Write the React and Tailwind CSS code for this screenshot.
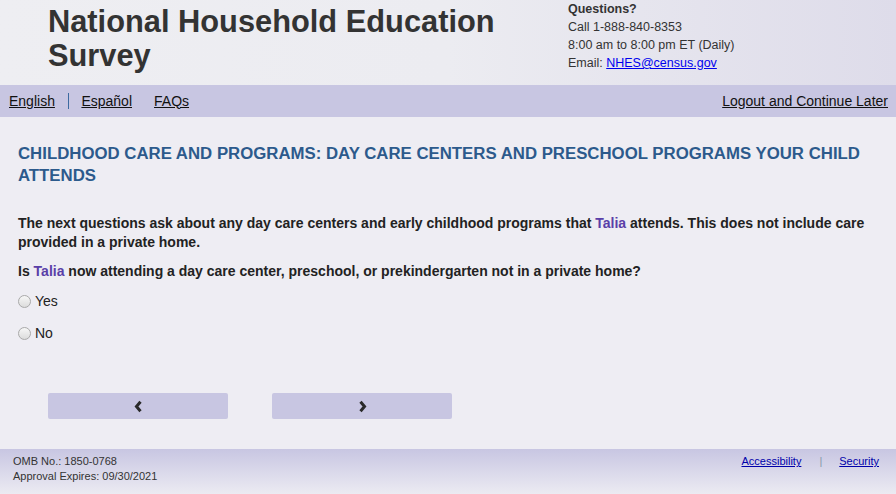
import React from "react";

function Radio({ label }) {
  return (
    <label className="flex items-center h-[20px] text-[14px] text-[#222]">
      <span className="w-[13px] h-[13px] rounded-full border border-[#a9a9a9] bg-gradient-to-b from-[#f7f7f7] to-[#dcdcdc] ml-[18px] mr-[4px]"></span>
      {label}
    </label>
  );
}

export default function App() {
  return (
    <div className="w-[896px] h-[494px] flex flex-col bg-[#eeedf3] font-['Liberation_Sans',Arial,sans-serif] overflow-hidden">
      {/* header */}
      <div className="h-[85px] flex bg-gradient-to-r from-[#eeeef2] via-[#ececf1] to-[#dedcea]">
        <div className="w-[520px] pl-[48px] pt-[5px]">
          <h1 className="text-[30.8px] leading-[34px] font-bold text-[#333]">
            National Household Education Survey
          </h1>
        </div>
        <div className="pl-[48px] text-[12.5px] leading-[18px] text-[#333]">
          <p className="font-bold">Questions?</p>
          <p>Call 1-888-840-8353</p>
          <p>8:00 am to 8:00 pm ET (Daily)</p>
          <p>
            Email: <a className="text-[#0000ee] underline">NHES@census.gov</a>
          </p>
        </div>
      </div>

      {/* nav */}
      <div className="h-[32px] bg-[#c8c6e2] flex items-center justify-between px-[9px] text-[14px] text-[#111]">
        <div className="flex items-center">
          <a className="underline">English</a>
          <span className="w-[1.5px] h-[16px] bg-[#3d6aa0] ml-[13px] mr-[12px]"></span>
          <a className="underline">Español</a>
          <a className="underline ml-[22px]">FAQs</a>
        </div>
        <a className="underline mr-[-1px]">Logout and Continue Later</a>
      </div>

      {/* main */}
      <div className="flex-1 flex flex-col">
        <h2 className="px-[18px] pt-[26px] text-[16.8px] leading-[22px] font-bold text-[#2c5a8c] uppercase">
          Childhood Care and Programs: Day Care Centers and Preschool Programs Your Child Attends
        </h2>
        <p className="px-[18px] mt-[27px] text-[14px] leading-[19px] font-bold text-[#222]">
          The next questions ask about any day care centers and early childhood programs that{" "}
          <span className="text-[#5a3fa8]">Talia</span> attends. This does not include care provided in a private home.
        </p>
        <p className="px-[18px] mt-[10px] text-[14px] leading-[19px] font-bold text-[#222]">
          Is <span className="text-[#5a3fa8]">Talia</span> now attending a day care center, preschool, or prekindergarten not in a private home?
        </p>
        <div className="mt-[10px] flex flex-col gap-[12px]">
          <Radio label="Yes" />
          <Radio label="No" />
        </div>
        <div className="flex gap-[44px] pl-[48px] mt-[50px]">
          <button className="w-[180px] h-[26px] bg-[#c8c6e2] rounded-[2px] flex items-center justify-center">
            <svg width="11" height="13" viewBox="0 0 11 13">
              <path d="M7.5 1.8 L3.5 6.5 L7.5 11.2" fill="none" stroke="#2a2a2a" strokeWidth="3" />
            </svg>
          </button>
          <button className="w-[180px] h-[26px] bg-[#c8c6e2] rounded-[2px] flex items-center justify-center">
            <svg width="11" height="13" viewBox="0 0 11 13">
              <path d="M3.5 1.8 L7.5 6.5 L3.5 11.2" fill="none" stroke="#2a2a2a" strokeWidth="3" />
            </svg>
          </button>
        </div>
      </div>

      {/* footer */}
      <div className="h-[45px] bg-gradient-to-b from-[#c8c6e2] to-[#ecebf2] flex justify-between px-[13px] pt-[5px] text-[11px] leading-[15px] text-[#333]">
        <div>
          <p>OMB No.: 1850-0768</p>
          <p>Approval Expires: 09/30/2021</p>
        </div>
        <div className="flex items-start pr-[4px]">
          <a className="underline text-[#0000aa]">Accessibility</a>
          <span className="ml-[18px] mr-[17px] text-[#8899aa]">|</span>
          <a className="underline text-[#0000aa]">Security</a>
        </div>
      </div>
    </div>
  );
}
